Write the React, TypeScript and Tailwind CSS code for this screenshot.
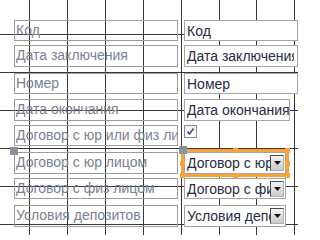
import React from "react";

type Row = {
  label: string;
  kind: "text" | "check" | "combo";
  value?: string;
  row: string;
  box?: string;
  selected?: boolean;
};

const rows: Row[] = [
  { label: "Код", kind: "text", value: "Код", row: "mt-[20px] h-[21px]", box: "w-[114px] pr-[3px]" },
  { label: "Дата заключения", kind: "text", value: "Дата заключения", row: "mt-[4px] h-[22px]", box: "w-[114px] pr-[3px]" },
  { label: "Номер", kind: "text", value: "Номер", row: "mt-[6px] h-[21px]", box: "w-[114px] pr-[3px]" },
  { label: "Дата окончания", kind: "text", value: "Дата окончания", row: "mt-[5px] h-[22px]", box: "w-[106px]" },
  { label: "Договор с юр или физ лицом", kind: "check", row: "mt-[4px] h-[21px]" },
  { label: "Договор с юр лицом", kind: "combo", value: "Договор с юр лицом", row: "mt-[6px] h-[22px]", selected: true },
  { label: "Договор с физ лицом", kind: "combo", value: "Договор с физ лицом", row: "mt-[4px] h-[21px]" },
  { label: "Условия депозитов", kind: "combo", value: "Условия депозитов", row: "mt-[6px] h-[22px]" },
];

const gridX = [29, 67, 105, 143, 181, 219, 256, 294];
const gridY = [34, 72, 110, 148, 186, 224];

function Grid() {
  return (
    <svg className="absolute inset-0" width="298" height="235">
      {gridX.map((x) => (
        <line key={`x${x}`} x1={x + 0.5} y1="0" x2={x + 0.5} y2="235" stroke="#383838" strokeWidth="1" />
      ))}
      {gridY.map((y) => (
        <line key={`y${y}`} x1="0" y1={y + 0.5} x2="298" y2={y + 0.5} stroke="#383838" strokeWidth="1" />
      ))}
    </svg>
  );
}

// grey "move" square at the top-left corner of a selected control
function MoveHandle() {
  return <div className="absolute left-[-5px] top-[-6px] h-[8px] w-[8px] bg-[#8c9099]" />;
}

function Knob() {
  return <span className="h-[5px] w-[5px] bg-[#f8a43b]" />;
}

function Selection() {
  return (
    <>
      <div className="pointer-events-none absolute -inset-[3px] border-[3px] border-[#f8a43b]" />
      <div className="pointer-events-none absolute -inset-[4px] flex flex-col justify-between">
        <div className="flex justify-between">
          <Knob />
          <Knob />
          <Knob />
        </div>
        <div className="flex justify-between">
          <Knob />
          <Knob />
        </div>
        <div className="flex justify-between">
          <Knob />
          <Knob />
          <Knob />
        </div>
      </div>
      <MoveHandle />
    </>
  );
}

function DropButton() {
  return (
    <span className="mt-[2px] mr-[1px] flex h-[16px] w-[14px] shrink-0 items-center justify-center border border-t-[#4a4a4a] border-l-[#4a4a4a] border-r-[#b0b0b0] border-b-[#b0b0b0] bg-gradient-to-b from-[#f4f4f4] to-[#c9c9c9]">
      <svg width="7" height="4" viewBox="0 0 7 4">
        <path d="M0 0h7L3.5 4z" fill="#111" />
      </svg>
    </span>
  );
}

function Combo({ value, selected }: { value: string; selected?: boolean }) {
  return (
    <div className="relative h-full w-[102px]">
      <div className="flex h-full w-full items-start border border-[#a4a4a4] bg-white">
        <span className="min-w-0 flex-1 overflow-hidden whitespace-nowrap pl-[2px] pt-[2px] leading-[16px] text-[#262c44]">
          {value}
        </span>
        <DropButton />
      </div>
      {selected && <Selection />}
    </div>
  );
}

function CheckBox() {
  return (
    <div className="flex h-[13px] w-[13px] items-center justify-center border border-[#8e8e8e] bg-gradient-to-b from-[#eeeeee] to-[#ffffff]">
      <svg width="9" height="9" viewBox="0 0 9 9">
        <path d="M1.5 4.5l2 2.5L7.5 1.5" fill="none" stroke="#3d5088" strokeWidth="1.6" />
      </svg>
    </div>
  );
}

export default function App() {
  return (
    <div className="relative h-[235px] w-[298px] overflow-hidden bg-white font-['Liberation_Sans',Arial,sans-serif] text-[14px]">
      <Grid />
      <div className="relative flex flex-col pl-[14px]">
        {rows.map((r) => (
          <div key={r.label} className={`flex shrink-0 gap-[6px] ${r.row}`}>
            <div className="relative h-full w-[164px] shrink-0 border border-[#9c9c9c]">
              <div className="overflow-hidden whitespace-nowrap pl-[1px] pt-[1px] leading-[16px] text-[#7b8191]">
                {r.label}
              </div>
              {r.selected && <MoveHandle />}
            </div>
            <div className="h-full">
              {r.kind === "text" && (
                <div className={`h-full border border-[#a6a6a6] bg-white ${r.box}`}>
                  <div className="overflow-hidden whitespace-nowrap pl-[2px] pt-[2px] leading-[16px] text-[#262c44]">
                    {r.value}
                  </div>
                </div>
              )}
              {r.kind === "check" && <CheckBox />}
              {r.kind === "combo" && <Combo value={r.value ?? ""} selected={r.selected} />}
            </div>
          </div>
        ))}
      </div>
    </div>
  );
}
